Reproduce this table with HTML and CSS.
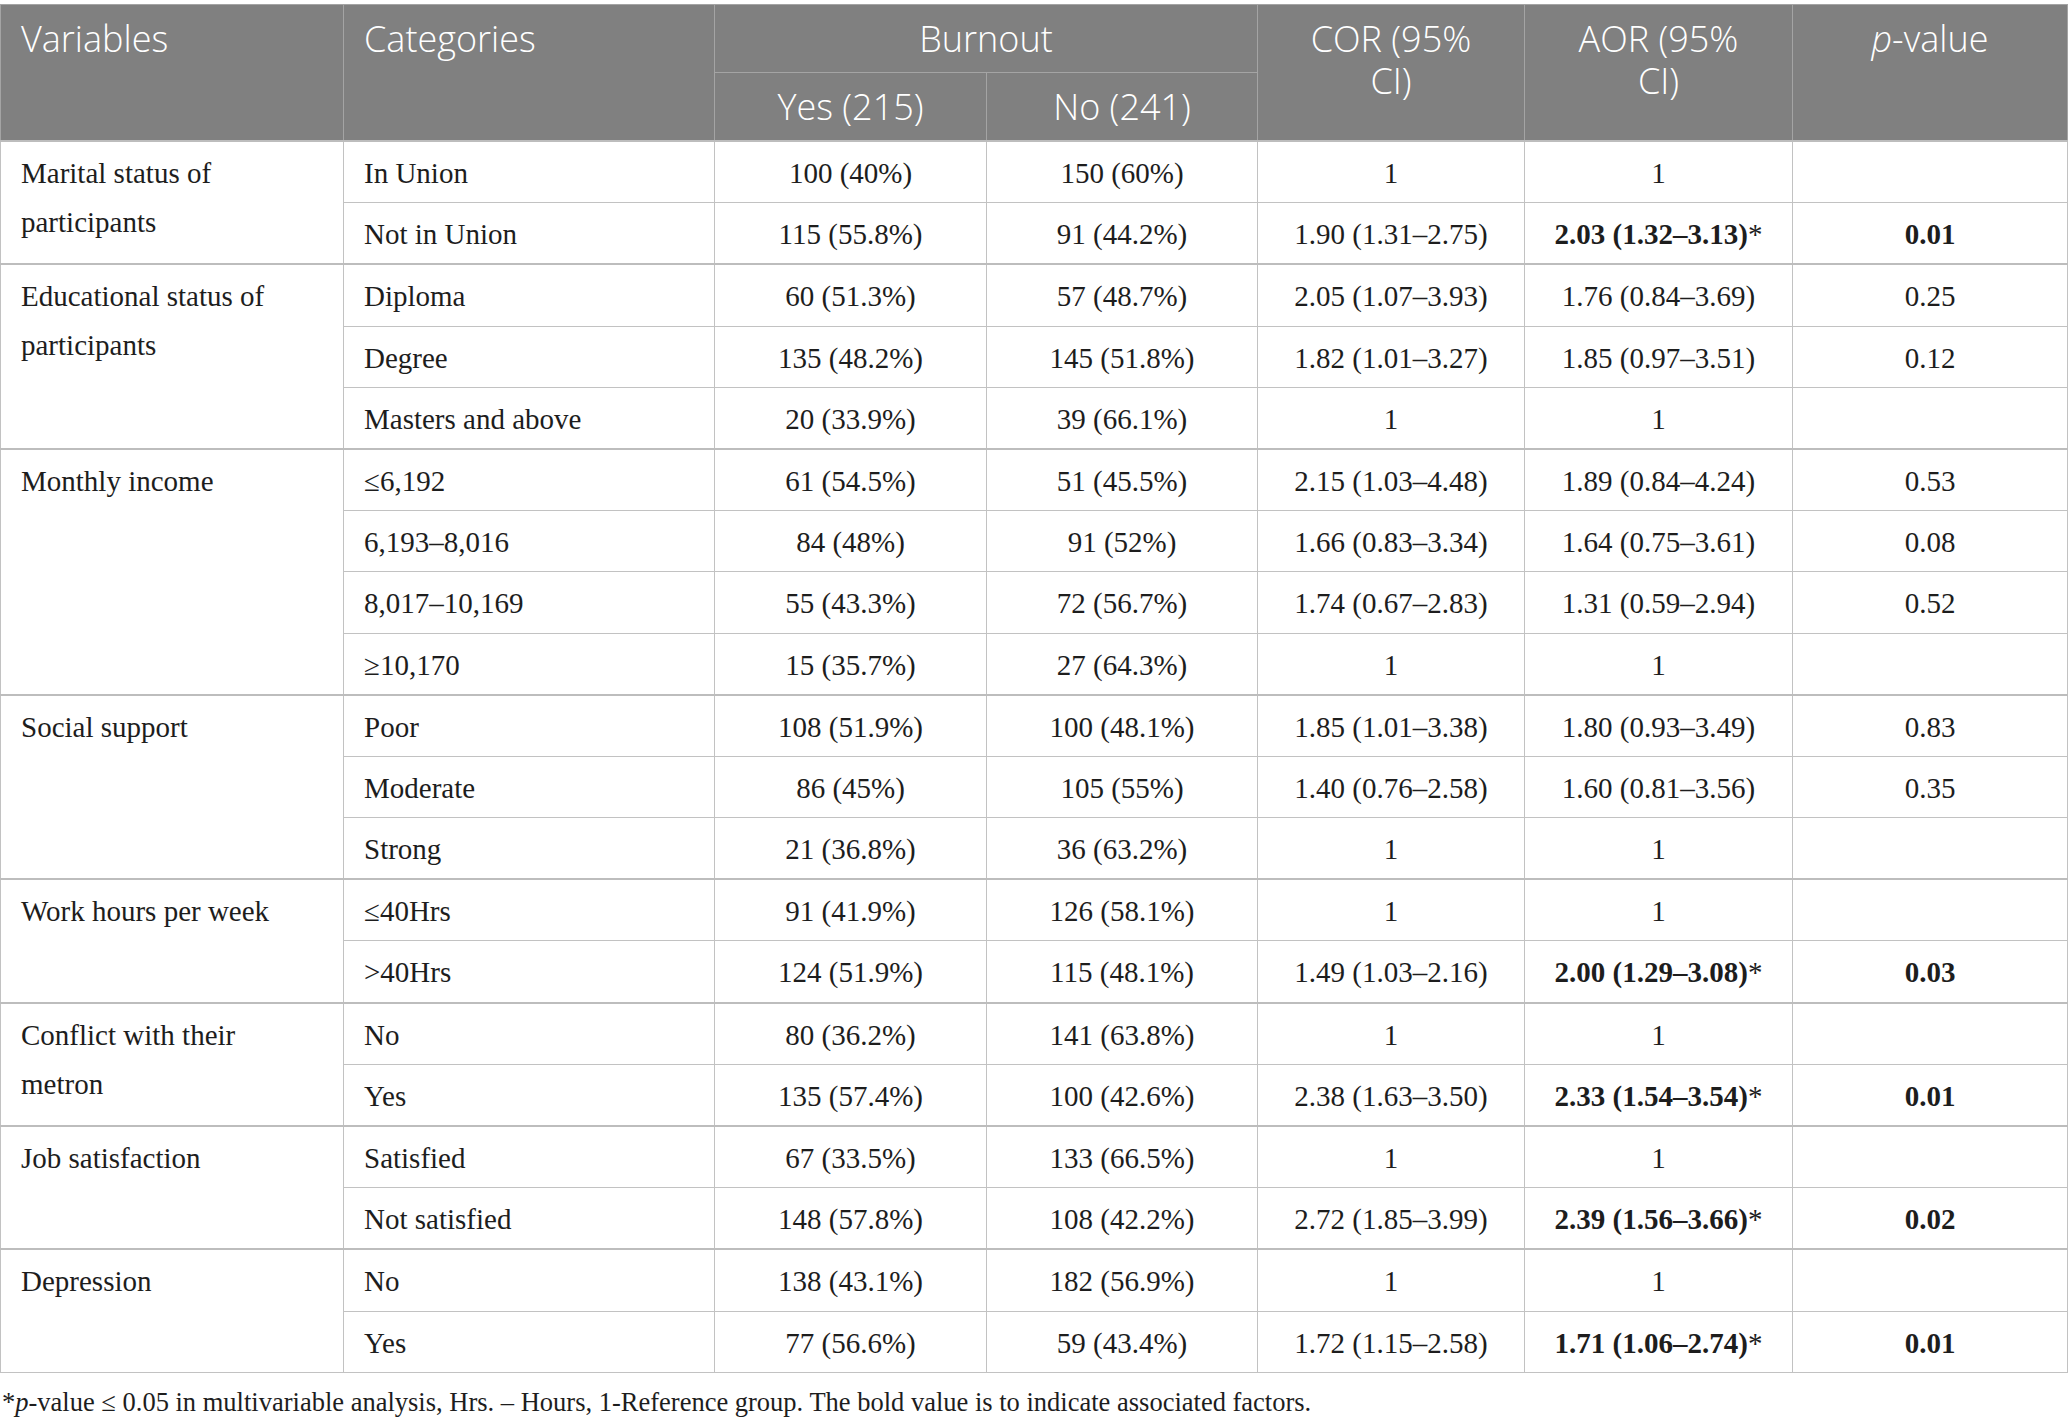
FILE: index.html
```html
<!DOCTYPE html>
<html lang="en">
<head>
  <meta charset="UTF-8">
  <title>Factors associated with burnout</title>
  <link rel="stylesheet" href="styles.css">
</head>
<body>
  <table class="results">
    <colgroup>
      <col class="c-var">
      <col class="c-cat">
      <col class="c-yes">
      <col class="c-no">
      <col class="c-cor">
      <col class="c-aor">
      <col class="c-p">
    </colgroup>
    <thead>
      <tr>
        <th class="left" rowspan="2">Variables</th>
        <th class="left" rowspan="2">Categories</th>
        <th colspan="2">Burnout</th>
        <th rowspan="2">COR (95%<br>CI)</th>
        <th rowspan="2">AOR (95%<br>CI)</th>
        <th rowspan="2"><i>p</i>-value</th>
      </tr>
      <tr>
        <th>Yes (215)</th>
        <th>No (241)</th>
      </tr>
    </thead>

    <!-- Marital status -->
    <tbody>
      <tr>
        <td class="var" rowspan="2">Marital status of<br>participants</td>
        <td class="cat">In Union</td>
        <td>100 (40%)</td>
        <td>150 (60%)</td>
        <td>1</td>
        <td>1</td>
        <td></td>
      </tr>
      <tr>
        <td class="cat">Not in Union</td>
        <td>115 (55.8%)</td>
        <td>91 (44.2%)</td>
        <td>1.90 (1.31–2.75)</td>
        <td><b>2.03 (1.32–3.13)</b>*</td>
        <td><b>0.01</b></td>
      </tr>
    </tbody>

    <!-- Education -->
    <tbody>
      <tr>
        <td class="var" rowspan="3">Educational status of<br>participants</td>
        <td class="cat">Diploma</td>
        <td>60 (51.3%)</td>
        <td>57 (48.7%)</td>
        <td>2.05 (1.07–3.93)</td>
        <td>1.76 (0.84–3.69)</td>
        <td>0.25</td>
      </tr>
      <tr>
        <td class="cat">Degree</td>
        <td>135 (48.2%)</td>
        <td>145 (51.8%)</td>
        <td>1.82 (1.01–3.27)</td>
        <td>1.85 (0.97–3.51)</td>
        <td>0.12</td>
      </tr>
      <tr>
        <td class="cat">Masters and above</td>
        <td>20 (33.9%)</td>
        <td>39 (66.1%)</td>
        <td>1</td>
        <td>1</td>
        <td></td>
      </tr>
    </tbody>

    <!-- Income -->
    <tbody>
      <tr>
        <td class="var" rowspan="4">Monthly income</td>
        <td class="cat">≤6,192</td>
        <td>61 (54.5%)</td>
        <td>51 (45.5%)</td>
        <td>2.15 (1.03–4.48)</td>
        <td>1.89 (0.84–4.24)</td>
        <td>0.53</td>
      </tr>
      <tr>
        <td class="cat">6,193–8,016</td>
        <td>84 (48%)</td>
        <td>91 (52%)</td>
        <td>1.66 (0.83–3.34)</td>
        <td>1.64 (0.75–3.61)</td>
        <td>0.08</td>
      </tr>
      <tr>
        <td class="cat">8,017–10,169</td>
        <td>55 (43.3%)</td>
        <td>72 (56.7%)</td>
        <td>1.74 (0.67–2.83)</td>
        <td>1.31 (0.59–2.94)</td>
        <td>0.52</td>
      </tr>
      <tr>
        <td class="cat">≥10,170</td>
        <td>15 (35.7%)</td>
        <td>27 (64.3%)</td>
        <td>1</td>
        <td>1</td>
        <td></td>
      </tr>
    </tbody>

    <!-- Social support -->
    <tbody>
      <tr>
        <td class="var" rowspan="3">Social support</td>
        <td class="cat">Poor</td>
        <td>108 (51.9%)</td>
        <td>100 (48.1%)</td>
        <td>1.85 (1.01–3.38)</td>
        <td>1.80 (0.93–3.49)</td>
        <td>0.83</td>
      </tr>
      <tr>
        <td class="cat">Moderate</td>
        <td>86 (45%)</td>
        <td>105 (55%)</td>
        <td>1.40 (0.76–2.58)</td>
        <td>1.60 (0.81–3.56)</td>
        <td>0.35</td>
      </tr>
      <tr>
        <td class="cat">Strong</td>
        <td>21 (36.8%)</td>
        <td>36 (63.2%)</td>
        <td>1</td>
        <td>1</td>
        <td></td>
      </tr>
    </tbody>

    <!-- Work hours -->
    <tbody>
      <tr>
        <td class="var" rowspan="2">Work hours per week</td>
        <td class="cat">≤40Hrs</td>
        <td>91 (41.9%)</td>
        <td>126 (58.1%)</td>
        <td>1</td>
        <td>1</td>
        <td></td>
      </tr>
      <tr>
        <td class="cat">&gt;40Hrs</td>
        <td>124 (51.9%)</td>
        <td>115 (48.1%)</td>
        <td>1.49 (1.03–2.16)</td>
        <td><b>2.00 (1.29–3.08)</b>*</td>
        <td><b>0.03</b></td>
      </tr>
    </tbody>

    <!-- Conflict -->
    <tbody>
      <tr>
        <td class="var" rowspan="2">Conflict with their<br>metron</td>
        <td class="cat">No</td>
        <td>80 (36.2%)</td>
        <td>141 (63.8%)</td>
        <td>1</td>
        <td>1</td>
        <td></td>
      </tr>
      <tr>
        <td class="cat">Yes</td>
        <td>135 (57.4%)</td>
        <td>100 (42.6%)</td>
        <td>2.38 (1.63–3.50)</td>
        <td><b>2.33 (1.54–3.54)</b>*</td>
        <td><b>0.01</b></td>
      </tr>
    </tbody>

    <!-- Job satisfaction -->
    <tbody>
      <tr>
        <td class="var" rowspan="2">Job satisfaction</td>
        <td class="cat">Satisfied</td>
        <td>67 (33.5%)</td>
        <td>133 (66.5%)</td>
        <td>1</td>
        <td>1</td>
        <td></td>
      </tr>
      <tr>
        <td class="cat">Not satisfied</td>
        <td>148 (57.8%)</td>
        <td>108 (42.2%)</td>
        <td>2.72 (1.85–3.99)</td>
        <td><b>2.39 (1.56–3.66)</b>*</td>
        <td><b>0.02</b></td>
      </tr>
    </tbody>

    <!-- Depression -->
    <tbody>
      <tr>
        <td class="var" rowspan="2">Depression</td>
        <td class="cat">No</td>
        <td>138 (43.1%)</td>
        <td>182 (56.9%)</td>
        <td>1</td>
        <td>1</td>
        <td></td>
      </tr>
      <tr>
        <td class="cat">Yes</td>
        <td>77 (56.6%)</td>
        <td>59 (43.4%)</td>
        <td>1.72 (1.15–2.58)</td>
        <td><b>1.71 (1.06–2.74)</b>*</td>
        <td><b>0.01</b></td>
      </tr>
    </tbody>
  </table>

  <p class="note">*<i>p</i>-value ≤ 0.05 in multivariable analysis, Hrs. – Hours, 1-Reference group. The bold value is to indicate associated factors.</p>
</body>
</html>
```

FILE: styles.css
```css
body {
  margin: 0;
  padding-top: 4px;
  background-color: #fff;
  color: #1d1d1d;
  font-family: "Liberation Serif", "Times New Roman", serif;
}
.results {
  border-collapse: collapse;
  table-layout: fixed;
  width: 2067px;
}
.c-var { width: 343px; }
.c-cat { width: 371px; }
.c-yes { width: 272px; }
.c-no { width: 271px; }
.c-cor { width: 267px; }
.c-aor { width: 268px; }
.c-p { width: 275px; }

.results th {
  background-color: #808080;
  color: #fff;
  font-family: "Open Sans", "Noto Sans", sans-serif;
  font-weight: 350;
  font-size: 36px;
  line-height: 42px;
  padding: 13px 20px 12px;
  text-align: center;
  vertical-align: top;
  border: 1px solid #a4a4a4;
}
.results th.left {
  text-align: left;
}
.results th i {
  font-style: italic;
}
.results tbody {
  border-top: 2px solid #bdbdbd;
}
.results td {
  font-size: 29px;
  line-height: 49px;
  padding: 7px 20px 4.2px;
  text-align: center;
  vertical-align: top;
  border: 1px solid #c2c2c2;
}
.results td.var,
.results td.cat {
  text-align: left;
}
.results td b {
  font-weight: bold;
}
.note {
  margin: 14px 0 0 2px;
  font-size: 26.5px;
  line-height: 30px;
}
```
